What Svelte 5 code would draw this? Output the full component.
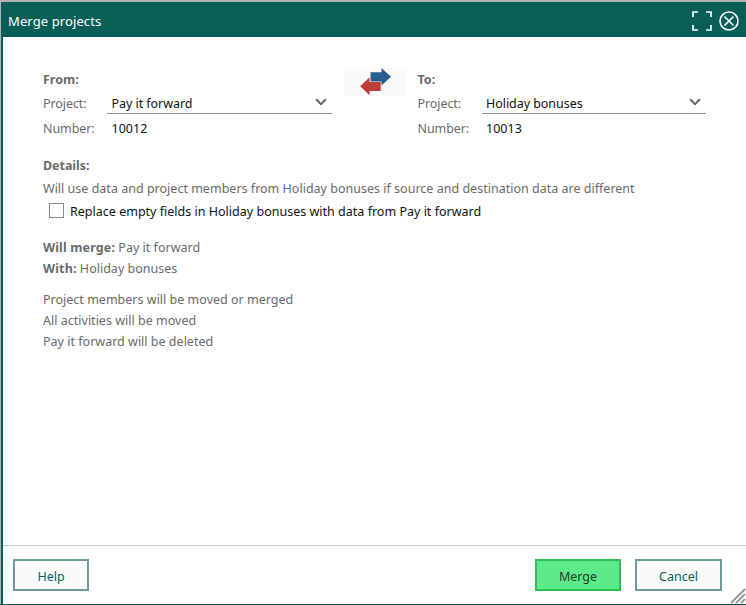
<script>
  let replaceEmpty = $state(false);
  const sides = [
    { title: 'From:', project: 'Pay it forward', number: '10012' },
    { title: 'To:', project: 'Holiday bonuses', number: '10013' }
  ];
</script>

{#snippet side(s)}
  <section class="side">
    <div class="heading">{s.title}</div>
    <div class="row project">
      <span class="label">Project:</span>
      <div class="select">
        <span>{s.project}</span>
        <svg width="12" height="8" viewBox="0 0 12 8"><path d="M1 1.2 6 6.2 11 1.2" fill="none" stroke="#666" stroke-width="2" /></svg>
      </div>
    </div>
    <div class="row number"><span class="label">Number:</span><span class="value">{s.number}</span></div>
  </section>
{/snippet}

<div class="dialog">
  <header>
    <h1>Merge projects</h1>
    <svg class="expand" width="20" height="20" viewBox="0 0 20 20"><path d="M1 6V1H6M14 1H19V6M19 14V19H14M6 19H1V14" fill="none" stroke="#fff" stroke-width="1.7" /></svg>
    <svg width="20" height="20" viewBox="0 0 20 20"><g fill="none" stroke="#fff" stroke-width="1.6"><circle cx="10" cy="10" r="9" /><path d="M5.5 5.5 14.5 14.5M14.5 5.5 5.5 14.5" /></g></svg>
  </header>
  <main>
    <div class="sides">
      {@render side(sides[0])}
      <div class="swap">
        <svg width="62" height="28" viewBox="0 0 62 28">
          <path d="M26.5 4.2H37.5V0L47 8.8 37.5 17.5V13.5H26.5Z" fill="#285f8f" />
          <path d="M36.7 14H25.5V9.3L16.2 18.3 25.5 27.3V23H36.7Z" fill="#bd3e38" />
        </svg>
      </div>
      {@render side(sides[1])}
    </div>
    <div class="heading details">Details:</div>
    <p class="info">Will use data and project members from Holiday bonuses if source and destination data are different</p>
    <label class="check"><input type="checkbox" bind:checked={replaceEmpty} /><span>Replace empty fields in Holiday bonuses with data from Pay it forward</span></label>
    <div class="summary">
      <p><b>Will merge:</b> Pay it forward</p>
      <p><b>With:</b> Holiday bonuses</p>
    </div>
    <div class="effects">
      <p>Project members will be moved or merged</p>
      <p>All activities will be moved</p>
      <p>Pay it forward will be deleted</p>
    </div>
  </main>
  <footer>
    <button class="help">Help</button>
    <button class="merge">Merge</button>
    <button class="cancel">Cancel</button>
    <svg class="grip" width="16" height="16" viewBox="0 0 16 16"><path d="M1 15 15 1M6 15 15 6M11 15 15 11" stroke="#999" stroke-width="2" /></svg>
  </footer>
</div>

<style>
  .dialog {
    box-sizing: border-box;
    width: 746px;
    height: 605px;
    display: flex;
    flex-direction: column;
    border-top: 2px solid #b2b2b2;
    border-bottom: 1px solid #095f58;
    background: linear-gradient(90deg, #a9b5b4 0 1px, #095f58 1px 3px, #fff 3px);
    font: 12.5px/21px "Noto Sans", "Open Sans", sans-serif;
    letter-spacing: 0.01px;
    color: #6a6a6a;
    overflow: hidden;
  }
  header {
    height: 35px;
    flex: none;
    box-sizing: border-box;
    margin-left: 1px;
    padding: 0 7px;
    display: flex;
    align-items: center;
    background: #095f58;
    color: #fff;
  }
  header svg { position: relative; top: 1px; }
  h1 { margin: 0 auto 0 0; font-size: 13px; letter-spacing: 0.1px; font-weight: 400; padding-top: 4px; }
  .expand { margin-right: 7px; }
  main { flex: 1; padding: 31px 40px 0 43px; }
  p { margin: 0; }
  .heading, b { font-weight: 700; }
  b { letter-spacing: 0.14px; }
  .sides { display: flex; height: 74px; }
  .side { width: 288.5px; }
  .heading { height: 21px; line-height: 23px; }
  .row { display: flex; }
  .label { width: 64px; flex: none; line-height: 29px; letter-spacing: -0.08px; }
  .select {
    box-sizing: border-box;
    width: 224.5px;
    height: 25px;
    padding: 0 5px 0 4.5px;
    display: flex;
    justify-content: space-between;
    align-items: center;
    border-bottom: 1px solid #909090;
    color: #111;
    line-height: 24px;
    letter-spacing: -0.05px;
  }
  .select span { padding-top: 5px; }
  .select svg { position: relative; top: 1px; }
  .project { height: 25px; }
  .number { height: 26px; }
  .value { padding-left: 4.5px; color: #111; line-height: 29px; }
  .swap { width: 62px; height: 28px; background: #fafafa; margin: 0 11.5px 0 12.5px; }
  .details { margin-top: 12px; letter-spacing: -0.04px; }
  .info { line-height: 28px; height: 24px; }
  .check { display: flex; align-items: center; height: 23px; padding-left: 6px; color: #111; }
  .check span { padding-top: 1px; }
  input {
    appearance: none;
    width: 15px;
    height: 15px;
    margin: 0 6px 0 0;
    border: 1px solid #8a8a8a;
    background: #fff;
    flex: none;
  }
  input:checked { background: #095f58; }
  .summary { margin-top: 15px; }
  .effects { margin-top: 10px; }
  footer {
    position: relative;
    height: 59px;
    flex: none;
    box-sizing: border-box;
    margin-left: 3px;
    padding: 13px 24px 0 10px;
    display: flex;
    border-top: 1px solid #c5d0ce;
  }
  button {
    box-sizing: border-box;
    height: 32px;
    padding: 2px 0 0;
    border: 2px solid #6b9c98;
    background: #fafafa;
    color: #095f58;
    font: inherit;
  }
  .help { width: 76px; margin-right: auto; }
  .merge { width: 86px; margin-right: 14px; background: #5ceb88; border-color: #27c157; color: #1d3d2c; }
  .cancel { width: 87px; }
  .grip { position: absolute; right: 0; bottom: 0; }
</style>
